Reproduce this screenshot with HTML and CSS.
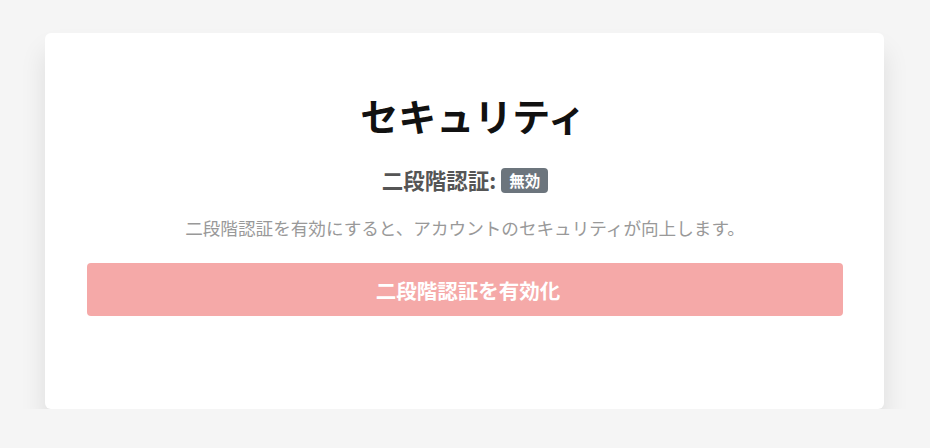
FILE: index.html
```html
<!DOCTYPE html>
<html lang="ja">
<head>
<meta charset="utf-8">
<link rel="stylesheet" href="styles.css">
</head>
<body>
<div class="page">
  <section class="card">
    <h1 class="title">セキュリティ</h1>
    <p class="status">二段階認証: <span class="badge">無効</span></p>
    <p class="desc">二段階認証を有効にすると、アカウントのセキュリティが向上します。</p>
    <button class="btn" disabled>二段階認証を有効化</button>
  </section>
</div>
</body>
</html>
```
FILE: styles.css
```css
html, body {
  margin: 0;
  padding: 0;
  background: #f5f5f5;
  font-family: "Noto Sans CJK JP", "Noto Sans", sans-serif;
}
.page {
  padding: 33px 46px 0 45px;
}
.card {
  background: #fff;
  border-radius: 6px;
  box-shadow: 0 18px 26px rgba(0,0,0,0.1);
  padding: 50px 41px 93px 42px;
  text-align: center;
  box-sizing: border-box;
  height: 376px;
}
.title {
  margin: 0;
  padding-left: 16px;
  font-size: 38px;
  font-weight: 700;
  line-height: 64px;
  color: #111;
}
.status {
  margin: 18px 0 0;
  font-size: 21.5px;
  font-weight: 700;
  color: #555;
  line-height: 30px;
}
.badge {
  display: inline-block;
  background: #6c757d;
  color: #fff;
  font-size: 15.5px;
  font-weight: 700;
  line-height: 21px;
  padding: 2px 8px;
  border-radius: 4px;
  vertical-align: 2px;
}
.desc {
  margin: 20px 0 0;
  font-size: 17.6px;
  color: #999;
  line-height: 26px;
}
.btn {
  display: block;
  width: 100%;
  margin-top: 22px;
  height: 53px;
  border: none;
  border-radius: 4px;
  background: #f5a9a8;
  color: #fff;
  font-family: inherit;
  font-size: 20.5px;
  font-weight: 700;
  padding-left: 12px;
}
```
